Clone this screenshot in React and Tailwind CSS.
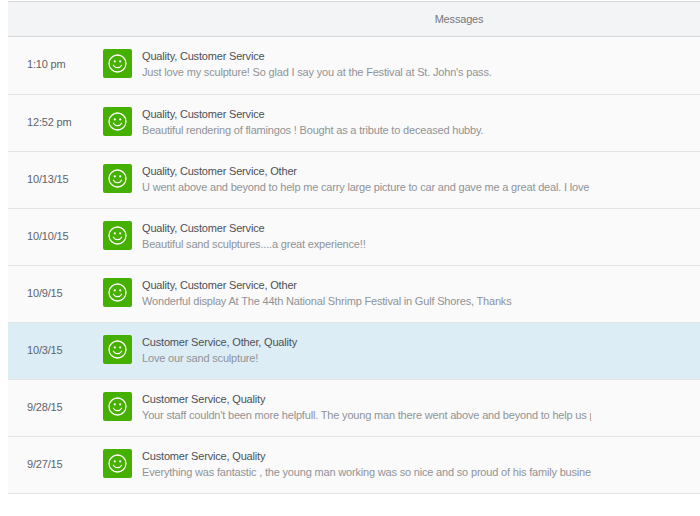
const rows = [
  { date: '1:10 pm', tags: 'Quality, Customer Service', text: "Just love my sculpture! So glad I say you at the Festival at St. John's pass." },
  { date: '12:52 pm', tags: 'Quality, Customer Service', text: 'Beautiful rendering of flamingos ! Bought as a tribute to deceased hubby.' },
  { date: '10/13/15', tags: 'Quality, Customer Service, Other', text: 'U went above and beyond to help me carry large picture to car and gave me a great deal. I love' },
  { date: '10/10/15', tags: 'Quality, Customer Service', text: 'Beautiful sand sculptures....a great experience!!' },
  { date: '10/9/15', tags: 'Quality, Customer Service, Other', text: 'Wonderful display At The 44th National Shrimp Festival in Gulf Shores, Thanks' },
  { date: '10/3/15', tags: 'Customer Service, Other, Quality', text: 'Love our sand sculpture!', active: true },
  { date: '9/28/15', tags: 'Customer Service, Quality', text: "Your staff couldn't been more helpfull. The young man there went above and beyond to help us p" },
  { date: '9/27/15', tags: 'Customer Service, Quality', text: 'Everything was fantastic , the young man working was so nice and so proud of his family busine' },
]

const Smiley = () => (
  <div className="w-[29px] h-[29px] shrink-0 rounded-[2px] bg-[#46b000] flex items-center justify-center">
    <svg width="19" height="19" viewBox="0 0 19 19" fill="none" stroke="#fff">
      <circle cx="9.5" cy="9.5" r="8.5" strokeWidth="1.3" />
      <circle cx="6.8" cy="7.4" r="1.1" fill="#fff" stroke="none" />
      <circle cx="12.2" cy="7.4" r="1.1" fill="#fff" stroke="none" />
      <path d="M5.4 11.2c1 1.8 2.5 2.5 4.1 2.5s3.1-.7 4.1-2.5" strokeWidth="1.2" strokeLinecap="round" />
    </svg>
  </div>
)

const App = () => {
  return (
    <div className="w-[700px] h-[516px] bg-white overflow-hidden pl-2 pt-[1px] font-['Liberation_Sans',Arial,sans-serif] text-[11px] tracking-[-0.18px]">
      <div className="h-[36px] bg-[#f3f4f6] border-t border-b border-[#d4d6da] flex items-center justify-center pl-[210px] text-[#74787e]">
        Messages
      </div>
      {rows.map((row, i) => (
        <div
          key={row.date}
          className={`${i === 0 ? 'h-[58px]' : 'h-[57px]'} border-b border-[#e4e4e4] flex items-start pt-[12px] ${row.active ? 'bg-[#dcedf6]' : 'bg-[#fafafa]'}`}
        >
          <div className="w-[95px] pl-[19px] pt-[8px] shrink-0 text-[#5f6369] leading-[15px]">{row.date}</div>
          <Smiley />
          <div className="w-[449px] ml-[10px] overflow-hidden whitespace-nowrap">
            <div className="text-[#4c5056] leading-[15px]">{row.tags}</div>
            <div className="text-[#909397] leading-[16px]">{row.text}</div>
          </div>
        </div>
      ))}
    </div>
  )
}

export default App
